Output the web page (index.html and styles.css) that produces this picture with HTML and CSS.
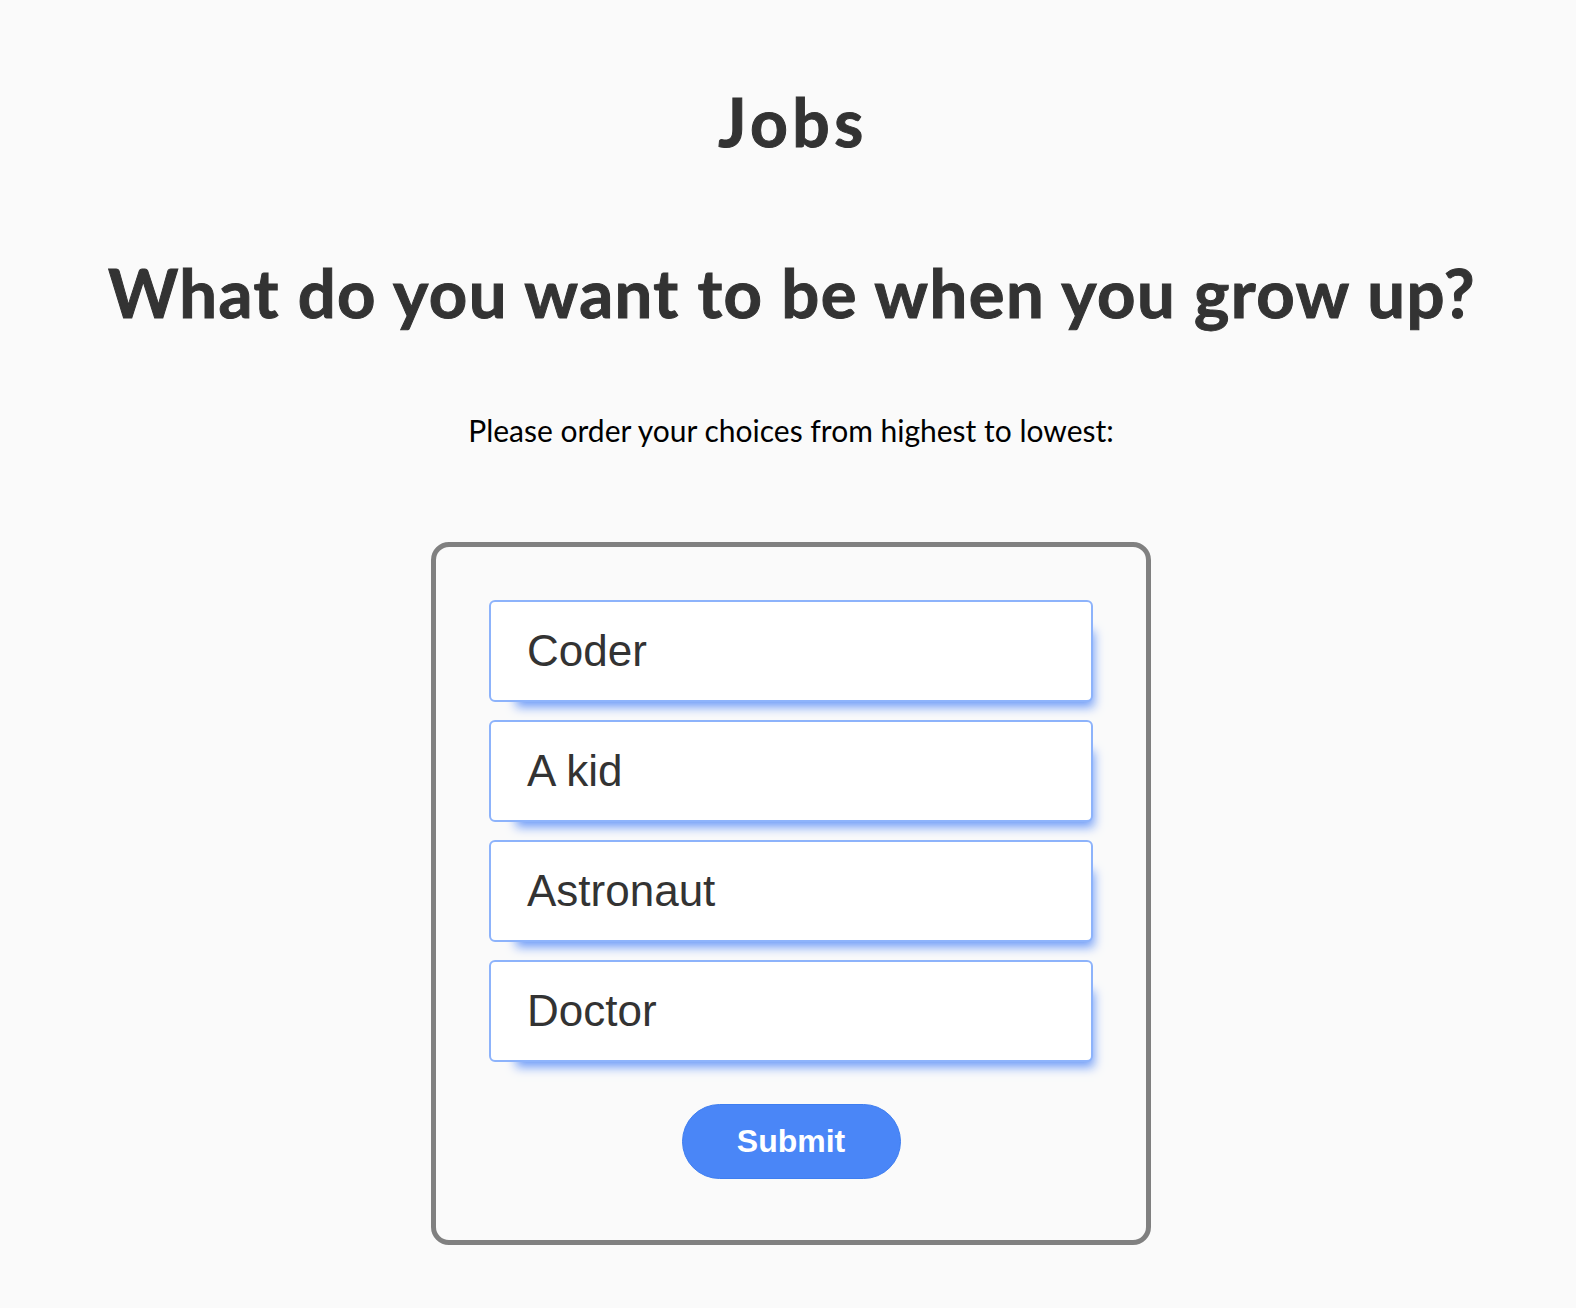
FILE: index.html
```html
<!DOCTYPE html>
<html lang="en">
<head>
<meta charset="utf-8">
<title>Jobs</title>
<link rel="stylesheet" href="styles.css">
</head>
<body>
<main class="page">
  <h1 class="title">Jobs</h1>
  <h2 class="question">What do you want to be when you grow up?</h2>
  <p class="prompt">Please order your choices from highest to lowest:</p>
  <form class="ranker">
    <ul class="choices">
      <li class="choice">Coder</li>
      <li class="choice">A kid</li>
      <li class="choice">Astronaut</li>
      <li class="choice">Doctor</li>
    </ul>
    <button type="button" class="submit">Submit</button>
  </form>
</main>
</body>
</html>
```

FILE: styles.css
```css
html, body {
  margin: 0;
  background: #fafafa;
}

body {
  padding-left: 6px;
}

.page {
  padding-top: 84px;
  padding-bottom: 40px;
  display: flex;
  flex-direction: column;
  align-items: center;
}

.title {
  margin: 0;
  padding-left: 4px;
  font-family: Lato, "Open Sans", sans-serif;
  font-weight: 700;
  font-size: 66px;
  line-height: 76px;
  letter-spacing: 4.5px;
  -webkit-text-stroke: 1px #333333;
  color: #333333;
  text-align: center;
}

.question {
  margin: 92px 0 0;
  padding-left: 2px;
  font-family: Lato, "Open Sans", sans-serif;
  font-weight: 700;
  font-size: 67px;
  line-height: 80px;
  letter-spacing: 1.45px;
  -webkit-text-stroke: 1px #333333;
  color: #333333;
  text-align: center;
}

.prompt {
  margin: 81px 0 0;
  font-family: Lato, "Open Sans", sans-serif;
  font-weight: 400;
  font-size: 30px;
  line-height: 34px;
  color: #000000;
  text-align: center;
}

.ranker {
  margin-top: 95px;
  box-sizing: border-box;
  width: 720px;
  padding: 53px 53px 61px;
  border: 5px solid #808080;
  border-radius: 18px;
  display: flex;
  flex-direction: column;
  align-items: center;
}

.choices {
  list-style: none;
  margin: 0;
  padding: 0;
  width: 100%;
  display: flex;
  flex-direction: column;
  gap: 18px;
}

.choice {
  box-sizing: border-box;
  height: 102px;
  padding-left: 36px;
  display: flex;
  align-items: center;
  background: #ffffff;
  border: 2px solid #8db3fb;
  border-radius: 6px;
  box-shadow: 14px 18px 10px -13px #6f9cf8;
  font-family: "Liberation Sans", Arial, sans-serif;
  font-size: 44px;
  color: #333333;
}

.submit {
  margin-top: 42px;
  width: 219px;
  height: 75px;
  border: 1px solid #3f7ef0;
  border-radius: 38px;
  background: #4a86f7;
  color: #ffffff;
  font-family: "Liberation Sans", Arial, sans-serif;
  font-weight: 700;
  font-size: 32px;
  padding: 0;
  cursor: pointer;
}
```
